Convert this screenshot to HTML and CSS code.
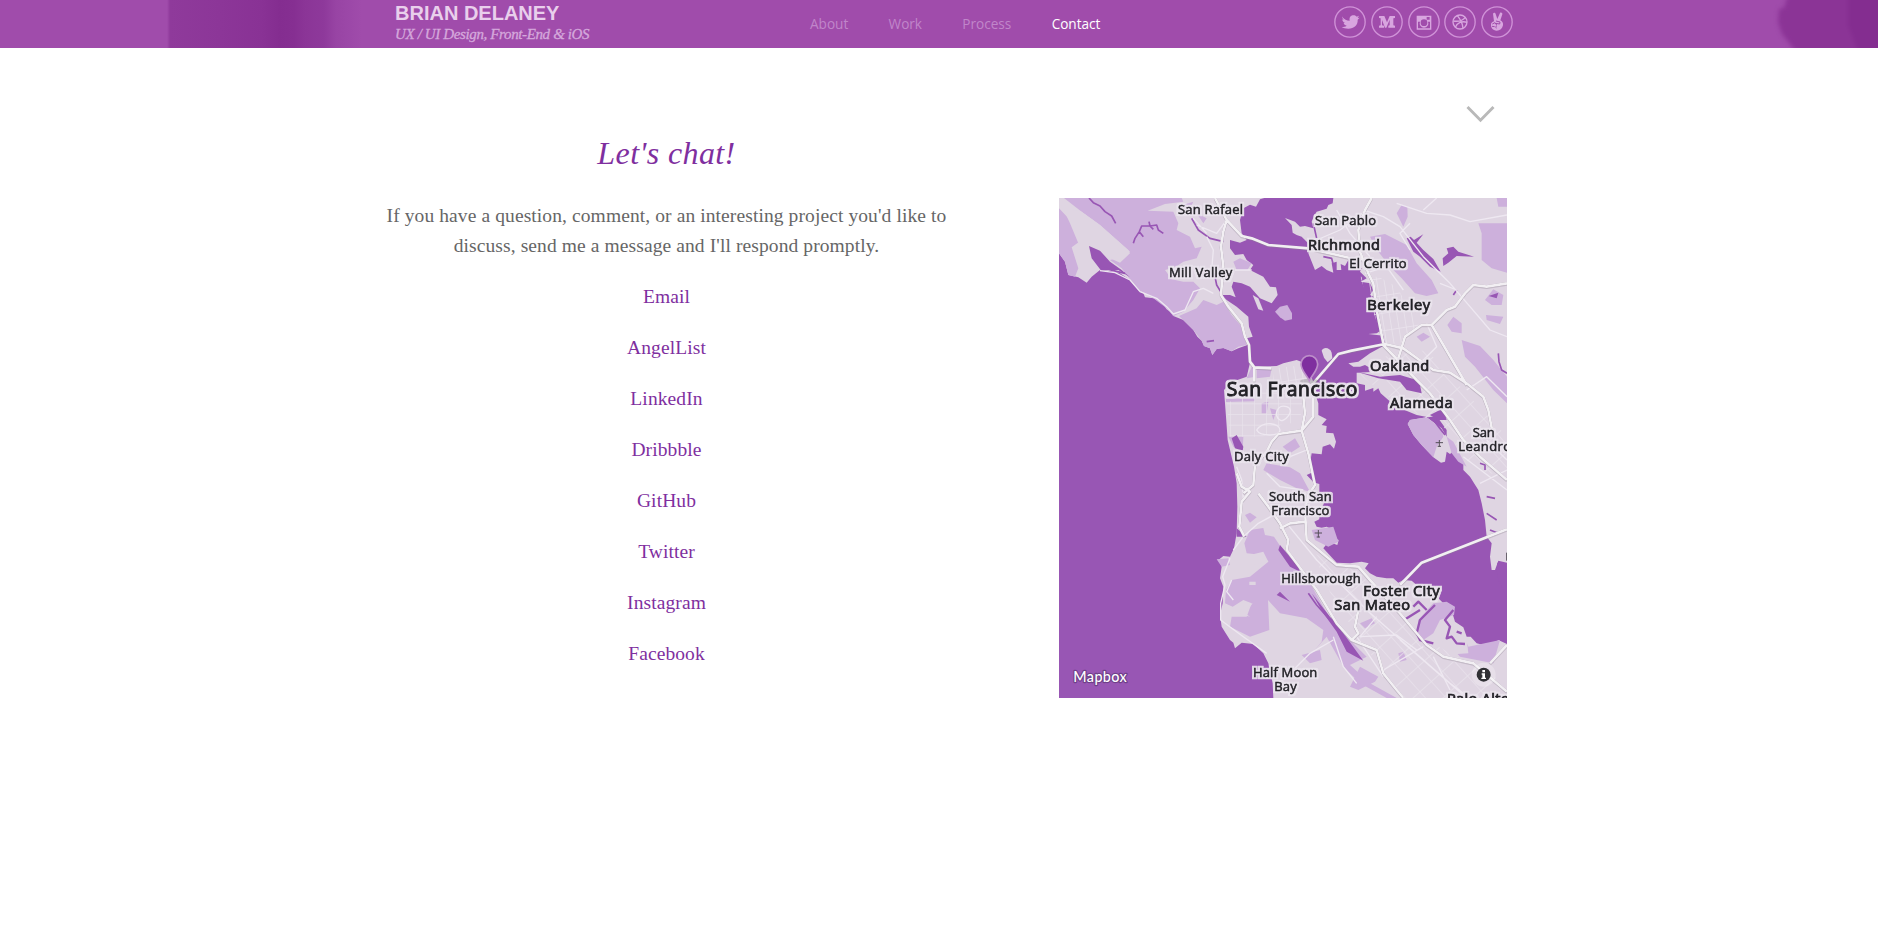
FILE: index.html
```html
<!DOCTYPE html>
<html lang="en">
<head>
<meta charset="utf-8">
<title>Brian Delaney - Contact</title>
<link rel="stylesheet" href="styles.css">
</head>
<body>
<header class="header">
  <svg class="header-blob" viewBox="0 0 110 48" aria-hidden="true"><path d="M20-5L16 8L11 9L10 22L14 34L19 40L28 52H115V-5Z"/><path class="deep" d="M80-5H115V52H90L80 25Z"/></svg>
  <div class="header-inner">
    <div class="brand">
      <div class="brand-name">BRIAN DELANEY</div>
      <div class="brand-tag">UX / UI Design, Front-End &amp; iOS</div>
    </div>
    <nav class="nav">
      <a>About</a><a>Work</a><a>Process</a><a class="active">Contact</a>
    </nav>
    <div class="social">
      <svg viewBox="-48 -48 96 96"><circle r="45.500"/><path class="f" d="M-24-16C-17-8-10-4-1-4C-3-15 3-20 11-20C15-20 18-18 20-16L27-19L23-12L29-13L23-7C24 9 12 20-5 20C-13 20-20 18-25 15C-19 15-14 14-10 11C-15 10-18 7-19 3L-15 3C-21 0-23-3-23-8L-19-7C-24-11-25-15-22-20Z"/></svg>
      <svg viewBox="-48 -48 96 96"><circle r="45.500"/><path class="f" d="M-24-18H-8L0 1L8-18H24V-12L19-11V10L24 11V17H4V11L8 10V-7L-2 17H-6L-15-6V10L-9 11V17H-24V11L-19 10V-11L-24-12Z"/></svg>
      <svg viewBox="-48 -48 96 96"><circle r="45.500"/><path class="f" fill-rule="evenodd" d="M-22-19H22V23H-22ZM-18-1V19H18V-1H12A13 13 0 1 1-12-1ZM8-15V-7H17V-15ZM0-8A10 10 0 1 0 0 12A10 10 0 1 0 0-8Z"/></svg>
      <svg viewBox="-48 -48 96 96"><circle r="45.500"/><g class="l"><circle r="21"/><path d="M-20-3C-5-1 10-6 16-14M-8-19C2-7 8 6 9 19M-14 16C-8 2 6-4 21 1"/></g></svg>
      <svg viewBox="-48 -48 96 96"><circle r="45.500"/><path class="f" d="M-12-25C-10-29-5-28-4-24L1-9L9-27C12-30 17-27 16-23L10-5C17-2 19 4 18 10C16 20 9 26-1 26C-12 26-19 17-18 7C-18 2-14 0-9-2Z"/><path class="cut" d="M-14 6L-6 2L-1 9M-3-3L9 0L8 6L-4 4M0 10C-4 13-4 16-2 19M-15 13L-7 14"/></svg>
    </div>
  </div>
</header>
<main class="page">
  <section class="chat">
    <h1>Let's chat!</h1>
    <p>If you have a question, comment, or an interesting project you'd like to<br>discuss, send me a message and I'll respond promptly.</p>
    <p><a>Email</a></p>
    <p><a>AngelList</a></p>
    <p><a>LinkedIn</a></p>
    <p><a>Dribbble</a></p>
    <p><a>GitHub</a></p>
    <p><a>Twitter</a></p>
    <p><a>Instagram</a></p>
    <p><a>Facebook</a></p>
  </section>
  <aside class="side">
    <svg class="chevron" viewBox="0 0 30 18"><path d="M1.500 2L14.500 15.300L27.500 2"/></svg>
    <svg class="map" viewBox="27 24 1344 1500" role="img" aria-label="Map of the San Francisco Bay Area">
      <defs>
        <pattern id="grid" width="36" height="32" patternUnits="userSpaceOnUse"><path d="M0 0H36M0 0V32" fill="none" stroke="#e9e3ec" stroke-width="4"/></pattern>
        <pattern id="grid2" width="22" height="52" patternUnits="userSpaceOnUse" patternTransform="rotate(-9)"><path d="M0 0H22M0 0V52" fill="none" stroke="#ebe5ee" stroke-width="4"/></pattern>
        <pattern id="grid3" width="46" height="60" patternUnits="userSpaceOnUse" patternTransform="rotate(-42)"><path d="M0 0H46M0 0V60" fill="none" stroke="#e9e3ec" stroke-width="4"/></pattern>
        <filter id="halo" filterUnits="userSpaceOnUse" x="27" y="24" width="1344" height="1500" color-interpolation-filters="sRGB">
          <feMorphology in="SourceAlpha" operator="dilate" radius="6" result="wide"/>
          <feGaussianBlur in="wide" stdDeviation="1.500" result="soft"/>
          <feFlood flood-color="#e9e3ec"/>
          <feComposite in2="soft" operator="in" result="glow"/>
          <feMerge><feMergeNode in="glow"/><feMergeNode in="SourceGraphic"/></feMerge>
        </filter>
      </defs>
      <rect class="water" x="27" y="24" width="1344" height="1500"/>
      <!-- land masses -->
      <g class="land">
        <path d="M27 24H643L630 28L618 50L600 44L580 55L570 90L575 130L590 150L570 158L540 150V175L555 195L580 192L590 210L610 225L600 240L640 260L660 290L678 292L683 315L665 340L630 325L600 290L575 280L550 275L545 290L557 322L540 315L515 315L530 330L560 350L595 380L597 410L608 440L590 445L592 465L565 475L545 484L520 474L500 477L487 495L480 475L462 468L455 452L442 440L430 420L415 405L400 390L370 378L360 365L350 358L330 330L310 325L285 322L280 310L265 300L240 270L210 250L180 243L150 240L125 260L110 278L85 262L55 255L45 215L27 190Z"/>
        <path d="M608 315L625 325L640 362L625 358Z"/>
        <path d="M600 518L590 560L545 576L522 600L528 680L533 750L552 830L560 880L562 950L560 1030L552 1075L540 1100L520 1098L508 1108L515 1130L510 1165L520 1190L518 1240L510 1275L515 1310L540 1350L550 1358L555 1375L575 1358L610 1362L640 1390L655 1420L668 1480L670 1524H1371V1362L1345 1350L1320 1370L1280 1360L1262 1340L1250 1340L1240 1312L1215 1295L1206 1265L1180 1240L1165 1225L1150 1200L1100 1185L1085 1172L1060 1170L1045 1178L1030 1165L1010 1165L980 1160L960 1150L945 1135L956 1120L935 1115L900 1120L860 1118L820 1075L835 1055L862 1065L866 1050L838 1038L845 1018L830 1010L815 1013L800 1010L793 995L808 988V970L835 975L840 960L815 955L822 940L790 930L792 914H808V882L795 878L788 845L780 820L785 790L815 793L818 770L840 763L852 776L858 755L850 730L828 728L830 708L815 705L830 688L805 675V640L797 615L790 575L765 520L740 510L700 520L680 528L610 530Z"/>
        <path d="M850 24L848 40L835 45L830 56L800 65L792 78L785 95L790 115L765 108L750 110L735 95L705 84L725 105L728 128L740 135L755 140L780 165L775 190L795 240L815 228L830 240L850 248L845 220L860 215V240H874L872 222L885 228L895 210L915 228L935 235L930 245L950 265L932 275L960 280L970 300L960 315L976 322L985 370L995 420L980 430L955 432L1000 437L1005 465L960 490L925 515L895 520L910 530L930 530L945 525L980 545L920 548V580L945 585L945 602L970 594L970 605L985 595L992 610L1015 630L1040 650L1100 675L1135 682L1160 678L1190 720L1190 740L1175 715L1130 682L1080 690L1073 702L1090 735L1115 765L1150 802L1173 818L1185 815L1190 785L1200 792L1215 780L1222 810L1240 815L1240 840L1260 860L1285 900L1295 940L1305 990L1310 1040L1325 1060L1320 1100L1325 1140H1335L1345 1112L1371 1118V24Z"/>
        <path d="M815 482C820 470 840 472 845 488L847 505L833 517L822 503Z"/>
      </g>
      <!-- parks and open space -->
      <g class="park">
        <path d="M27 55L60 90L95 150L65 172L85 235L75 260L55 255L45 215L27 190ZM42 24H395L400 35L345 42L293 62L370 65L385 100L380 120L420 140L435 175L455 170L440 205L400 215L375 232L345 240L365 268L400 275L430 275L450 295L430 330L400 365L370 378L350 355L310 325L265 300L215 235L180 210L220 200L240 185L150 105L95 65Z"/>
        <path d="M387 378L440 355L460 330L500 345L520 335L545 375L575 410L585 430L590 465L565 470L545 484L520 474L500 477L487 495L480 475L462 468L455 452L430 420ZM550 215L570 205L605 220L592 240L560 240ZM380 50L430 35L420 55ZM440 70L470 85L460 100Z"/>
        <path d="M675 365L690 350L712 345L726 370V388L705 392L690 382Z"/>
        <path d="M960 140L1005 132L1070 165L1100 220L1145 270L1165 310L1130 318L1095 310L1055 265L1020 230L985 185ZM1055 45L1072 50L1073 80L1060 110L1040 70ZM1285 100H1371V248L1325 235L1295 210V130ZM1340 24H1371V50L1345 50ZM1305 330L1330 298L1360 315L1355 345L1325 345ZM1235 450L1290 468L1330 510L1371 560V640L1330 600L1275 530L1245 500ZM1192 405L1210 380L1235 400L1235 430L1205 425ZM1100 440L1120 428L1140 440L1115 455ZM1308 375L1360 380L1350 402L1310 390Z"/>
        <path d="M1080 690L1130 682L1175 718L1180 740L1160 770L1150 802L1115 765L1090 735L1073 702ZM1190 740L1210 755L1250 830L1225 815L1205 790Z"/>
        <path d="M600 1020L640 1014L645 1035L672 1040L692 1070L730 1120L780 1180L820 1250L850 1300L920 1370L950 1400L900 1425L960 1480L1040 1524H1010L930 1480L880 1430L830 1340L790 1385L815 1355L820 1320L770 1285L690 1270L654 1230L658 1320L600 1340L570 1325L540 1310L545 1280L590 1280L605 1240L580 1230L548 1250L525 1240L528 1200L545 1170L600 1160L655 1115L640 1095L590 1090L583 1060Z"/>
        <path d="M500 1108L535 1105L540 1125L515 1130ZM585 975L600 968L620 982L600 998ZM755 1395L810 1380L815 1410L780 1420ZM620 535L665 535L660 560L620 565ZM590 565L610 520L617 560ZM635 640L655 635L650 670L635 670ZM660 655L680 660L670 690ZM690 870L640 840L650 820L720 832L750 850L780 905L740 895ZM698 770L735 745L750 770L720 790ZM535 740L580 740L578 785L550 770ZM528 627L615 625V634L528 636ZM790 550L800 530L760 525Z"/>
        <path d="M1105 1290L1150 1240L1190 1235L1215 1250L1212 1275L1170 1290L1150 1330L1120 1350L1100 1330ZM1195 1310L1245 1345L1255 1370L1350 1350L1330 1420L1230 1400L1195 1360ZM930 1300L965 1285L975 1300L945 1315ZM1045 1390L1060 1385L1070 1410L1050 1415ZM930 1430L985 1460L975 1475L925 1500L900 1490ZM850 1010L865 1055L835 1070L795 1050L785 1020Z"/>
      </g>
      <g class="land"><path d="M27 30L70 60L95 65L150 105L235 180L240 190L210 218L180 205L117 168L85 160L60 100Z"/><path d="M580 1248L608 1240L585 1270L600 1280L570 1272Z"/><path d="M600 1095L640 1085L655 1115L600 1125ZM598 1175H617V1185H598Z"/><path d="M1170 1290L1210 1305L1250 1345L1255 1390L1180 1395Z"/></g>
      <!-- street grids -->
      <path fill="url(#grid)" d="M530 640L620 600L775 590L745 700L700 700L640 740L540 740Z"/>
      <path fill="url(#grid2)" d="M930 260L985 260L1040 290L1110 410L1060 460L1005 462ZM670 535L765 525L790 590L670 590Z"/>
      <path fill="url(#grid3)" d="M930 555L1000 500L1130 480L1240 600L1371 740V860L1270 840L1180 710L1040 640ZM790 1090L920 1140L1110 1340L1350 1470V1524H1050L940 1360L850 1230Z"/>
      <!-- lakes, lagoons and inlets -->
      <g class="water">
        <path d="M117 168L150 182L180 215L215 240L240 262L205 240L152 240L125 205Z"/>
        <path d="M1070 145L1082 140L1092 150L1120 133L1100 158L1120 180L1150 207L1172 245L1140 230L1110 200L1090 185ZM1178 205L1195 190L1190 175L1210 170L1225 185L1272 200L1220 198L1195 218L1180 228ZM1316 318L1345 308L1340 325Z"/>
        <path d="M920 545L990 560L1050 555L1100 570L1110 585L1115 610L1070 600L1050 575L985 565ZM1140 675L1180 655L1190 690L1165 690Z"/>
        <path d="M690 1065L745 1130L750 1145L720 1130L685 1080ZM785 1210L840 1280L880 1330L940 1412L890 1385L860 1325L820 1270ZM690 1205L720 1235L680 1215ZM770 855L785 848L792 878ZM545 745L560 735L580 770L578 782L555 775ZM560 1015L590 1040L560 1040Z"/>
        <path d="M1340 1140L1342 1118H1360L1371 1140V1225L1345 1170Z"/>
      </g>
      <g class="creek">
        <path d="M117 24L130 38L150 48L165 65L185 78L197 100M250 160L255 145L268 125L275 108L300 108L320 105L325 120L340 130M297 95L300 108L310 118M268 125L280 140M425 85L445 120L480 145L520 155M150 230L190 242L225 250M493 250L500 285L512 305M470 455L492 452"/>
        <path d="M790 100L800 145M820 200L845 205L850 225M1345 490L1347 515L1355 540L1371 550M1220 300L1210 315"/>
        <path class="bold" d="M1155 1245L1110 1290L1100 1330L1110 1350L1150 1360M1210 1260L1185 1290L1200 1310L1190 1345L1205 1340L1220 1360L1245 1362M1220 1325L1235 1330M1090 1250L1105 1235L1130 1260M1062 1290L1110 1260"/>
        <path d="M775 1210L800 1245L840 1290M1290 820L1305 825V840M1310 970L1340 990M1320 1020L1345 1030M1310 920L1335 925M1150 690L1185 735M840 1285L860 1300"/>
      </g>
      <!-- minor roads -->
      <g class="minor">
        <path d="M150 242L195 248L240 270L270 305L320 325L350 350L370 372L405 360L430 305L460 295L490 310M440 105L500 130L530 90M470 140L490 180L485 240M605 240L555 240M430 85L470 130"/>
        <path d="M800 150L870 120L950 60M860 60L900 130L960 200M940 60L1000 80L1050 110L1120 200L1200 280L1260 350L1320 420L1371 440M1040 40L1130 70L1200 75L1260 95L1371 75M1170 280L1220 300M1120 60L1160 24M1080 180L1050 130L1080 100M945 250L1010 230L1060 300M1130 400L1160 470L1100 530M1250 600L1310 560L1371 620"/>
        <path d="M560 830L575 870L580 925M625 1000L680 970M690 690C670 680 680 640 710 650S700 700 690 690ZM620 720C640 690 690 700 690 720S630 740 620 720ZM660 820L720 800L770 780M650 850L690 890L760 900M625 1000L580 1040L550 1080M540 1105L518 1160L525 1185L512 1240L512 1290L580 1340L650 1390M545 1170L530 1205L550 1230M700 1470L780 1390L850 1350M850 1340L880 1430L920 1480M980 1280L930 1340L1040 1335L1100 1380M1000 1440L1120 1370M1150 1400L1200 1500M1050 1350L1250 1524M920 1340L1000 1460M710 1000L800 1110L950 1260L1200 1480L1260 1524M1240 800L1371 900M1310 750L1371 810M1290 880L1371 840"/>
      </g>
      <!-- highways -->
      <g class="road">
        <path d="M495 24L530 90L520 125L513 170L520 230L513 315L535 350L575 400L585 440L597 465L600 515L613 532L665 535M613 532V575M530 90L575 138L605 145L655 165L775 175L900 204L935 210M965 24L945 60L925 120L930 185L955 250L970 280L980 360L1000 460"/>
        <path d="M785 585L865 492L905 482L1005 462L1060 475L1150 540L1200 548L1250 580L1300 620L1315 660L1330 740M1045 505L1065 440L1115 405L1145 405L1190 360L1215 350L1245 310L1270 285L1310 290L1371 280M1145 405L1250 585M1000 465L1100 570L1140 610L1200 690L1240 750L1290 800L1371 870"/>
        <path d="M790 600V680L755 722L775 790L795 885L775 915L765 960L770 1050L830 1100L860 1125L925 1130L960 1170L1050 1270L1130 1365L1180 1400L1270 1420L1371 1505M760 620L765 670L755 722L685 732L665 755L650 785L615 825L610 885L580 910M625 910L655 950L690 1000L715 1050L710 1080L800 1200L860 1300L905 1350L980 1380L1000 1450L1040 1500L1060 1524M690 1015L720 1000L765 995M925 1260L915 1310L925 1330L905 1350M560 850L575 890L600 905L575 935L568 1010L583 1040"/>
        <path d="M1050 1185L1115 1118L1371 1018M1320 1420L1371 1365"/>
      </g>
      <g class="plane"><path d="M805 1020V1042M794 1029H816M800 1041H810M1168 750V770M1157 758H1179M1163 769H1173"/></g>
      <path class="edge" d="M1370 1088V1112"/>
      <ellipse cx="778" cy="574" rx="28" ry="8" fill="#777" opacity=".3"/>
      <path class="pin" d="M778 572C769 552 753 542 753 522A25 25 0 1 1 803 522C803 542 787 552 778 572Z"/>
      <g class="label" filter="url(#halo)">
        <text x="384" y="73" textLength="195">San Rafael</text>
        <text x="357" y="261" textLength="190">Mill Valley</text>
        <text x="795" y="106" textLength="183">San Pablo</text>
        <text x="898" y="234" textLength="172">El Cerrito</text>
        <text x="1268" y="740" textLength="66">San</text>
        <text x="1225" y="782" textLength="158">Leandro</text>
        <text x="552" y="814" textLength="164">Daly City</text>
        <text x="657" y="934" textLength="188">South San</text>
        <text x="664" y="976" textLength="174">Francisco</text>
        <text x="694" y="1178" textLength="238">Hillsborough</text>
        <text x="609" y="1461" textLength="193">Half Moon</text>
        <text x="673" y="1502" textLength="67">Bay</text>
      </g>
      <g class="label city" filter="url(#halo)">
        <text x="774" y="181" textLength="216">Richmond</text>
        <text x="952" y="360" textLength="188">Berkeley</text>
        <text x="960" y="544" textLength="178">Oakland</text>
        <text x="1020" y="653" textLength="188">Alameda</text>
        <text x="940" y="1219" textLength="229">Foster City</text>
        <text x="853" y="1260" textLength="227">San Mateo</text>
        <text x="1191" y="1542" textLength="188">Palo Alto</text>
      </g>
      <text class="label metro" filter="url(#halo)" x="530" y="619" textLength="392">San Francisco</text>
      <text class="mapbox" x="70" y="1477" textLength="160">Mapbox</text>
      <circle cx="1301" cy="1454" r="36" fill="#fff" opacity=".25"/>
      <circle cx="1301" cy="1454" r="21" fill="#303034"/>
      <path fill="#fff" d="M1297 1440H1305V1447H1297ZM1295 1450H1305V1463H1308V1467H1294V1463H1297V1454H1295Z"/>
    </svg>
  </aside>
</main>
</body>
</html>
```
FILE: styles.css
```css
* { box-sizing: border-box; }
body {
  margin: 0;
  background: #fff;
  font-family: "Liberation Serif", serif;
}
.header {
  position: relative;
  height: 48px;
  overflow: hidden;
  background: linear-gradient(90deg, #a04cab 0, #a04cab 167px, #8f3a9b 170px, #8c3698 220px, #893295 262px, #842d90 280px, #862f92 294px, #8b3597 305px, #8e399b 324px, #9844a4 336px, #9c48a8 350px, #a04cab 362px);
}
.header-blob {
  position: absolute;
  right: 0;
  top: 0;
  width: 110px;
  height: 48px;
  overflow: visible;
  fill: #8b3496;
  filter: blur(2px);
}
.header-blob .deep { fill: #842d90; }
.header-inner {
  position: relative;
  display: flex;
  height: 48px;
  padding-left: 395px;
}
.brand { width: 415px; }
.brand-name {
  margin-top: .5px;
  font: bold 20px/24px "Liberation Sans", sans-serif;
  color: #e9cfec;
}
.brand-tag {
  margin-top: .5px;
  font-size: 15px;
  line-height: 18px;
  font-style: italic;
  letter-spacing: -.37px;
  color: #d5a8dc;
  -webkit-text-stroke: .3px #d5a8dc;
}
.nav {
  display: flex;
  gap: 40.300px;
  width: 524px;
  padding-top: 14px;
  font: 13.600px/20px "Open Sans", sans-serif;
  color: #c086ca;
}
.nav .active { color: #fff; }
.social { display: flex; gap: 4.750px; padding-top: 6.300px; }
.social svg { width: 32px; height: 32px; fill: none; stroke: #d093d8; stroke-width: 4; }
.social .f { fill: #d8a5df; stroke: none; }
.social .l { stroke: #d8a5df; }
.social .cut { stroke: #a04cab; stroke-width: 3; }
.page { display: flex; padding-left: 386px; }
.chat {
  width: 561px;
  padding-top: 85px;
  text-align: center;
  font-size: 19.500px;
  line-height: 30.600px;
  letter-spacing: .1px;
  color: #666;
}
.chat h1 {
  margin: 0 0 27.500px;
  font-size: 32px;
  font-weight: normal;
  font-style: italic;
  line-height: 40px;
  letter-spacing: .4px;
  color: #7f2f9f;
}
.chat p { margin: 0 0 20.400px; white-space: nowrap; }
.chat a { color: #7f2f9f; }
.side {
  display: flex;
  flex-direction: column;
  width: 448px;
  margin-left: 112px;
}
.chevron {
  align-self: flex-end;
  width: 30px;
  height: 18px;
  margin: 57px 11px 75px 0;
  fill: none;
  stroke: #b9b9b9;
  stroke-width: 2.900;
}
.map { display: block; width: 448px; height: 500px; }
.water { fill: #9856b4; }
.land { fill: #dfd5e2; }
.park { fill: #cdb0dc; }
.creek { fill: none; stroke: #9856b4; stroke-width: 5; stroke-linejoin: round; }
.creek .bold { stroke-width: 7; }
.minor { fill: none; stroke: #eee8f1; stroke-width: 4; stroke-linejoin: round; }
.road { filter: drop-shadow(0 1px 1.500px #8d8292); }
.road path { fill: none; stroke: #f2eff3; stroke-width: 8; stroke-linejoin: round; }
.plane, .edge { fill: none; stroke: #554f58; stroke-width: 3; }
.pin { fill: #7f2f9f; stroke: #bd8fca; stroke-width: 5; }
.label {
  font-family: "Open Sans", sans-serif;
  font-size: 39px;
  font-weight: 400;
  fill: #222126;
  stroke: #222126;
  stroke-width: 1.400;
}
.city { font-size: 44px; stroke-width: 2.200; }
.metro { font-size: 58px; stroke-width: 2.800; }
.mapbox {
  font: 500 43px Lato, sans-serif;
  fill: #fff;
  stroke: #70408a;
  stroke-width: 7;
  stroke-linejoin: round;
  paint-order: stroke;
}
```
